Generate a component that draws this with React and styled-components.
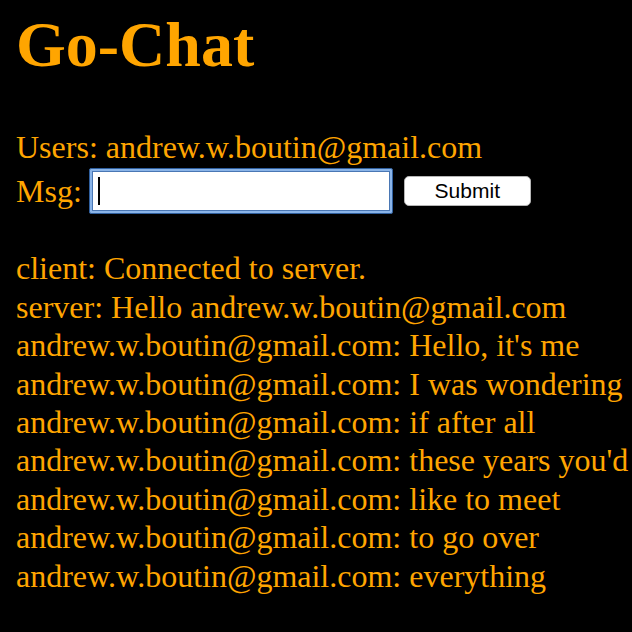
import styled, { createGlobalStyle } from "styled-components";

const GlobalStyle = createGlobalStyle`
  html, body {
    margin: 0;
    background: #000;
  }
  body {
    padding: 0 16px;
    font-family: "Liberation Serif", "Times New Roman", serif;
    font-size: 32px;
    line-height: 38.4px;
    color: #ffa500;
  }
`;

const messages = [
  "client: Connected to server.",
  "server: Hello andrew.w.boutin@gmail.com",
  "andrew.w.boutin@gmail.com: Hello, it's me",
  "andrew.w.boutin@gmail.com: I was wondering",
  "andrew.w.boutin@gmail.com: if after all",
  "andrew.w.boutin@gmail.com: these years you'd",
  "andrew.w.boutin@gmail.com: like to meet",
  "andrew.w.boutin@gmail.com: to go over",
  "andrew.w.boutin@gmail.com: everything",
];

function App() {
  return (
    <Page>
      <GlobalStyle />
      <Title>Go-Chat</Title>
      <UserLine>Users: andrew.w.boutin@gmail.com</UserLine>
      <MsgForm onSubmit={(e) => e.preventDefault()}>
        <Label>Msg:</Label>
        <InputWrap>
          <MsgInput />
          <Caret />
        </InputWrap>
        <SubmitButton type="submit">Submit</SubmitButton>
      </MsgForm>
      <MessageList>
        {messages.map((m, i) => (
          <Line key={i}>{m}</Line>
        ))}
      </MessageList>
    </Page>
  );
}

const Page = styled.div`
  display: flex;
  flex-direction: column;
`;

const Title = styled.h1`
  font-size: 64px;
  line-height: 70px;
  font-weight: bold;
  margin: 10px 0 48px;
`;

const UserLine = styled.div`
  white-space: nowrap;
`;

const MsgForm = styled.form`
  display: flex;
  align-items: center;
  margin-top: 2px;
`;

const Label = styled.span`
  margin-right: 7px;
`;

const InputWrap = styled.div`
  position: relative;
  display: flex;
`;

const MsgInput = styled.input`
  box-sizing: border-box;
  width: 304px;
  height: 46px;
  border: 1px solid #2f5f9e;
  box-shadow: inset 0 0 0 2px #8ab4e8, inset 0 0 0 3px #4a77b4;
  outline: none;
  border-radius: 2px;
  background: #fff;
  font-size: 26px;
  padding: 0 8px;
`;

const Caret = styled.span`
  position: absolute;
  left: 9px;
  top: 9px;
  width: 2px;
  height: 28px;
  background: #000;
`;

const SubmitButton = styled.button`
  box-sizing: border-box;
  width: 127px;
  height: 30px;
  margin-left: 11px;
  background: #fff;
  border: 1px solid #b5b5b5;
  border-radius: 5px;
  font-family: "Liberation Sans", Arial, sans-serif;
  font-size: 21px;
  color: #000;
  padding: 0;
`;

const MessageList = styled.div`
  margin-top: 35px;
  white-space: nowrap;
`;

const Line = styled.div``;

export default App;
